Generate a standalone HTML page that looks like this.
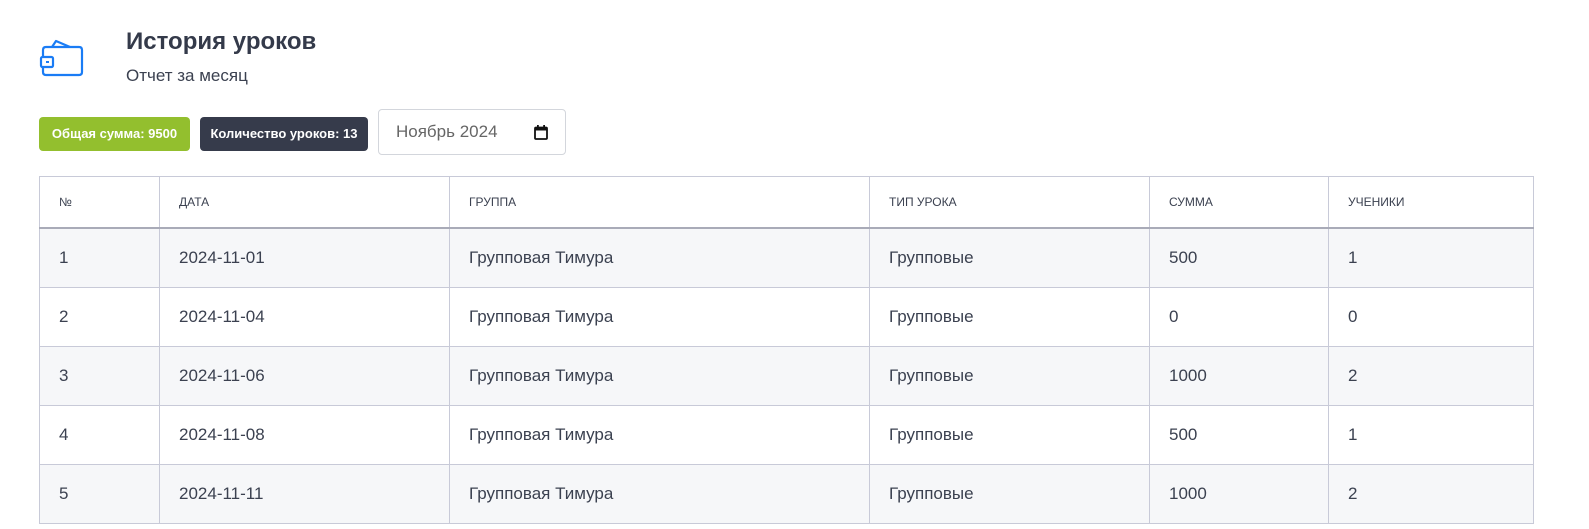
<!DOCTYPE html>
<html><head><meta charset="utf-8"><style>
body{margin:0;background:#fff;font-family:"Liberation Sans",sans-serif;color:#3b4150;width:1589px;height:529px;overflow:hidden;position:relative}
.abs{position:absolute}
h1{position:absolute;left:126px;top:28px;margin:0;font-size:24px;font-weight:bold;color:#343a4a}
.sub{left:126px;top:66px;font-size:17px;color:#3b4150}
.badge{top:117px;height:34px;line-height:34px;border-radius:4px;color:#fff;font-size:13px;font-weight:bold;text-align:center}
.inp{left:378px;top:109px;width:188px;height:46px;border:1px solid #d3d6dc;border-radius:4px;box-sizing:border-box}
table{position:absolute;left:39px;top:176px;width:1495px;border-collapse:collapse}
td,th{border:1px solid #c8cad8;text-align:left;padding:0 0 0 19px;font-size:17px}
th{font-size:12px;font-weight:normal;height:50px;color:#3b4150}
thead tr{border-bottom:2px solid #a9abb8}
td{height:58px}
tbody tr:nth-child(odd){background:#f6f7f9}
</style></head><body>
<svg class="abs" style="left:30px;top:30px" width="60" height="55" viewBox="30 30 60 55" fill="none" stroke="#1a7cf5" stroke-width="2.2" stroke-linejoin="round">
<path d="M43 57 L43 50 Q43 47 46 47 L79 47 Q82 47 82 50 L82 72 Q82 75 79 75 L46 75 Q43 75 43 72 L43 67"/>
<path d="M52 47 L56 41 L70 47"/>
<rect x="41" y="57" width="12" height="10" rx="1.5"/>
<rect x="46" y="61" width="3" height="2" fill="#1a7cf5" stroke="none"/>
</svg>
<h1>История уроков</h1>
<div class="abs sub">Отчет за месяц</div>
<div class="abs badge" style="left:39px;width:151px;background:#93bf2e">Общая сумма: 9500</div>
<div class="abs badge" style="left:200px;width:168px;background:#363b4b">Количество уроков: 13</div>
<div class="abs inp"><span class="abs" style="left:17px;top:12px;font-size:17px;color:#666">Ноябрь 2024</span>
<svg class="abs" style="left:155px;top:15px" width="14" height="15" viewBox="0 0 14 15"><rect x="1" y="2.5" width="12" height="11.5" rx="1" fill="none" stroke="#111" stroke-width="1.8"/><rect x="1" y="2.5" width="12" height="3" fill="#111"/><rect x="3" y="0" width="1.8" height="3" fill="#111"/><rect x="9.2" y="0" width="1.8" height="3" fill="#111"/></svg></div>
<table>
<colgroup><col style="width:120px"><col style="width:290px"><col style="width:420px"><col style="width:280px"><col style="width:179px"><col></colgroup>
<thead><tr><th>№</th><th>ДАТА</th><th>ГРУППА</th><th>ТИП УРОКА</th><th>СУММА</th><th>УЧЕНИКИ</th></tr></thead>
<tbody>
<tr><td>1</td><td>2024-11-01</td><td>Групповая Тимура</td><td>Групповые</td><td>500</td><td>1</td></tr>
<tr><td>2</td><td>2024-11-04</td><td>Групповая Тимура</td><td>Групповые</td><td>0</td><td>0</td></tr>
<tr><td>3</td><td>2024-11-06</td><td>Групповая Тимура</td><td>Групповые</td><td>1000</td><td>2</td></tr>
<tr><td>4</td><td>2024-11-08</td><td>Групповая Тимура</td><td>Групповые</td><td>500</td><td>1</td></tr>
<tr><td>5</td><td>2024-11-11</td><td>Групповая Тимура</td><td>Групповые</td><td>1000</td><td>2</td></tr>
</tbody></table>
</body></html>
